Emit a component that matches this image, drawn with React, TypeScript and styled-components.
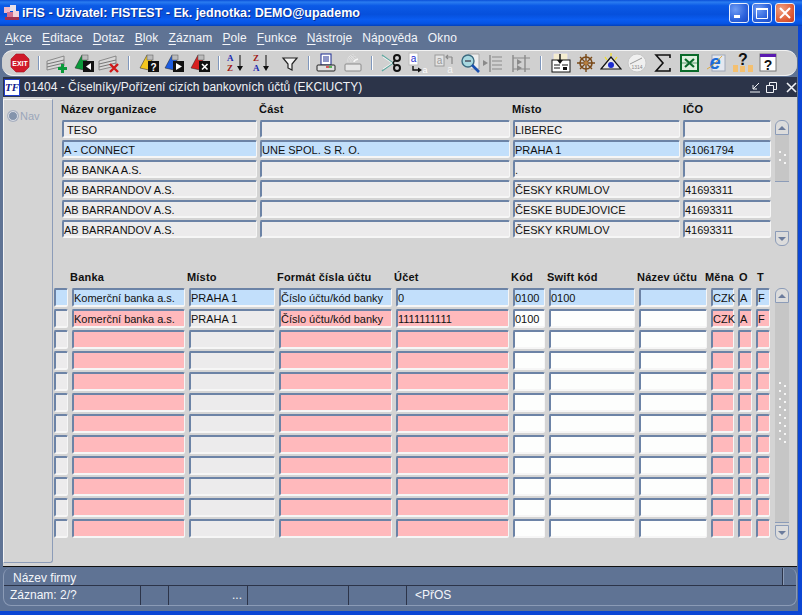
import React from 'react';
import styled, { createGlobalStyle } from 'styled-components';

const GlobalStyle = createGlobalStyle`
  html, body { margin: 0; padding: 0; background: #0a3fc8; }
  body { font-family: "Liberation Sans", Arial, sans-serif; }
`;

const Frame = styled.div`
  width: 802px;
  height: 615px;
  overflow: hidden;
  display: flex;
  flex-direction: column;
  background: #0b46d4;
`;

const TitleBar = styled.div`
  height: 26px;
  flex: none;
  display: flex;
  align-items: center;
  padding: 0 7px 0 3px;
  background: linear-gradient(#0a4fd8 0%, #2a7cf0 8%, #0b5ae6 22%, #0650dc 55%, #0a5cf0 75%, #0654e4 90%, #0440b8 100%);
  color: #fff;
`;

const TitleText = styled.div`
  margin-left: 1px;
  font: bold 12.5px "Liberation Sans", sans-serif;
  white-space: nowrap;
  text-shadow: 1px 1px 0 #0a2f90;
  flex: 1;
`;

const WinButtons = styled.div`
  display: flex;
  gap: 3px;
`;

const WinButton = styled.div<{ $close?: boolean }>`
  width: 20px;
  height: 20px;
  box-sizing: border-box;
  border: 1px solid #e8eefc;
  border-radius: 3px;
  background: ${p => (p.$close
    ? 'radial-gradient(circle at 30% 30%, #f0a080, #e0603a 60%, #c83c20)'
    : 'radial-gradient(circle at 30% 30%, #6f9cf4, #2c62dc 60%, #1a48c4)')};
  display: flex;
  align-items: center;
  justify-content: center;
`;

const Body = styled.div`
  flex: 1;
  display: flex;
  flex-direction: column;
  background: #5f7394;
  margin-right: 4px;
  margin-bottom: 4px;
  min-height: 0;
`;

const MenuBar = styled.div`
  height: 24px;
  flex: none;
  display: flex;
  align-items: center;
  padding-left: 5px;
  gap: 10px;
  color: #f4f6fa;
  font-size: 12px;
  letter-spacing: 0.1px;
`;

const MenuItem = styled.span`
  u { text-decoration: underline; text-underline-offset: 2px; }
`;

const Toolbar = styled.div`
  height: 26px;
  flex: none;
  box-sizing: border-box;
  margin: 0 1px 1px 2px;
  padding-left: 7px;
  display: flex;
  align-items: center;
  background: #d0d0d0;
  border-top: 1px solid #f2f2f2;
  border-bottom: 1px solid #f2f2f2;
  border-radius: 11px;
`;

const ToolIcon = styled.div<{ $ml: number }>`
  width: 22px;
  height: 22px;
  flex: none;
  margin-left: ${p => p.$ml}px;
  svg { display: block; }
`;

const ToolSep = styled.div<{ $ml: number }>`
  width: 2px;
  height: 14px;
  flex: none;
  margin-left: ${p => p.$ml}px;
  background: #7f97bd;
  border-right: 1px solid #fff;
  box-sizing: border-box;
`;

const Window = styled.div`
  flex: 1;
  display: flex;
  flex-direction: column;
  margin-left: 3px;
  margin-right: 1px;
  min-height: 0;
`;

const WindowHead = styled.div`
  height: 20px;
  flex: none;
  display: flex;
  align-items: center;
  background: #2c3449;
  color: #f0f2f6;
  font-size: 12px;
`;

const LogoBox = styled.div`
  width: 16px;
  height: 17px;
  margin: 0 4px 0 1px;
  box-sizing: border-box;
  border: 1px solid #1f3ccc;
  background: #fff;
  color: #13208c;
  font: italic bold 11px/14px "Liberation Serif", serif;
  text-align: center;
`;

const WindowTitle = styled.div`
  flex: 1;
  white-space: nowrap;
`;

const WindowActions = styled.div`
  display: flex;
  gap: 5px;
  svg { display: block; }
  svg:last-child { margin-left: 4px; }
`;

const Content = styled.div`
  flex: 1;
  display: flex;
  background: #d4d4d4;
  border-bottom: 1px solid #101010;
  min-height: 0;
`;

const NavPanel = styled.div`
  width: 50px;
  flex: none;
  box-sizing: border-box;
  margin: 2px 0 3px;
  padding: 10px 0 0 4px;
  display: flex;
  align-items: flex-start;
  gap: 2px;
  border-left: 1px solid #f4f4f4;
  border-top: 1px solid #f4f4f4;
  border-right: 1px solid #8c9cb8;
  border-bottom: 1px solid #8c9cb8;
  border-radius: 0 0 3px 0;
  color: #9aa6ba;
  font-size: 11px;
`;

const Radio = styled.span`
  width: 10px;
  height: 10px;
  margin-top: 1px;
  box-sizing: border-box;
  border-radius: 50%;
  background: #8494ac;
  border: 1px solid #d8dce4;
  box-shadow: 0 0 0 1px #a8b0c0;
`;

const Main = styled.div`
  flex: 1;
  display: flex;
  flex-direction: column;
  min-width: 0;
`;

const Section = styled.div<{ $left: number; $top: number }>`
  display: flex;
  align-items: flex-end;
  padding-left: ${p => p.$left}px;
  margin-top: ${p => p.$top}px;
`;

const Grid = styled.div<{ $cols: string; $rowGap: number; $colGap: number }>`
  display: grid;
  grid-template-columns: ${p => p.$cols};
  column-gap: ${p => p.$colGap}px;
  row-gap: ${p => p.$rowGap}px;
`;

const Label = styled.div<{ $shift?: number }>`
  height: 17px;
  line-height: 17px;
  font-size: 11px;
  font-weight: bold;
  color: #101010;
  letter-spacing: 0.2px;
  white-space: nowrap;
  margin-left: ${p => p.$shift ?? -1}px;
`;

const fieldColors = {
  gray: '#ecebec',
  blue: '#c2dffb',
  pink: '#ffb9bc',
  white: '#fdfefd',
};

type FieldTone = keyof typeof fieldColors;

const Field = styled.div<{ $tone: FieldTone; $h: number; $indent?: number }>`
  height: ${p => p.$h}px;
  box-sizing: border-box;
  padding-left: ${p => p.$indent ?? 0}px;
  background: ${p => fieldColors[p.$tone]};
  border-top: 2px solid #6c83a6;
  border-left: 2px solid #6c83a6;
  border-right: 1px solid #f6f6f6;
  border-bottom: 2px solid #f6f6f6;
  border-radius: 2px;
  color: #111;
  font-size: 11px;
  line-height: ${p => p.$h - 2}px;
  white-space: nowrap;
`;

const ScrollBar = styled.div<{ $h: number; $over: number; $ml: number }>`
  width: 14px;
  height: ${p => p.$h}px;
  flex: none;
  margin-left: ${p => p.$ml}px;
  margin-bottom: -${p => p.$over}px;
  display: flex;
  flex-direction: column;
`;

const ScrollButton = styled.div<{ $down?: boolean }>`
  height: 15px;
  flex: none;
  box-sizing: border-box;
  border: 1px solid #8c9cb8;
  border-radius: ${p => (p.$down ? '0 0 6px 6px' : '6px 6px 0 0')};
  background: #dcdcdc;
  display: flex;
  align-items: center;
  justify-content: center;
`;

const Arrow = styled.span<{ $down?: boolean }>`
  width: 0;
  height: 0;
  border-left: 4px solid transparent;
  border-right: 4px solid transparent;
  ${p => (p.$down ? 'border-top: 4px solid #6c7c9c;' : 'border-bottom: 4px solid #6c7c9c;')}
`;

const Thumb = styled.div<{ $h: number }>`
  height: ${p => p.$h}px;
  flex: none;
  box-sizing: border-box;
  background: #c6c6c6;
  border-bottom: 1px solid #8c9cb8;
  display: flex;
  align-items: center;
  justify-content: center;
`;

const TrackRest = styled.div`
  flex: 1;
`;

const StatusBar = styled.div`
  flex: none;
  box-sizing: border-box;
  margin: 1px 1px 5px 3px;
  height: 38px;
  border: 1px solid #8b9bb6;
  border-top: none;
  border-radius: 8px;
  color: #f4f6fa;
  font-size: 12px;
  display: flex;
  flex-direction: column;
`;

const StatusTop = styled.div`
  height: 18px;
  flex: none;
  box-sizing: border-box;
  padding-left: 9px;
  line-height: 20px;
  border-bottom: 1px solid #2c3449;
  display: flex;
  justify-content: space-between;
`;

const StatusCell = styled.div<{ $w?: number; $align?: string; $pad?: number }>`
  ${p => (p.$w ? `width: ${p.$w}px; flex: none;` : 'flex: 1;')}
  box-sizing: border-box;
  height: 100%;
  padding-left: ${p => p.$pad ?? 0}px;
  text-align: ${p => p.$align ?? 'left'};
  line-height: 19px;
  white-space: nowrap;
  border-right: 1px solid #2c3449;
  &:last-child { border-right: none; }
`;

const StatusBottom = styled.div`
  flex: 1;
  display: flex;
`;

const StatusEnd = styled.div`
  width: 13px;
  height: 17px;
  border-left: 1px solid #2c3449;
  box-shadow: inset 1px 0 0 #8b9bb6;
`;

const Doc = ({ color, mark }: { color: string; mark: React.ReactNode }) => (
  <svg width="22" height="22" viewBox="0 0 22 22">
    <path d="M2 16 L9 3 L14 7 L11 18 Z" fill={color} stroke="#222" strokeWidth="0.5" />
    <rect x="9" y="3" width="6" height="5" fill="#bbb" stroke="#555" strokeWidth="0.5" />
    <rect x="10" y="9" width="11" height="11" fill="#111" />
    {mark}
  </svg>
);

const Stripes = ({ mark }: { mark: React.ReactNode }) => (
  <svg width="22" height="22" viewBox="0 0 22 22">
    <path d="M1 9 L18 4 V14 L1 18 Z" fill="#d8d8d8" stroke="#777" strokeWidth="0.8" />
    <path d="M1 12 L18 8 M1 15 L18 11" stroke="#777" strokeWidth="1" />
    {mark}
  </svg>
);

const Glyph = ({ children }: { children: React.ReactNode }) => (
  <svg width="22" height="22" viewBox="0 0 22 22">{children}</svg>
);

const sortLetters = (top: string, bottom: string, topFill: string, bottomFill: string) => (
  <Glyph>
    <text x="2" y="9" fontSize="9" fontWeight="bold" fontFamily="Liberation Serif" fill={topFill}>{top}</text>
    <text x="2" y="19" fontSize="9" fontWeight="bold" fontFamily="Liberation Serif" fill={bottomFill}>{bottom}</text>
    <path d="M15 3 V15" stroke="#111" strokeWidth="1" />
    <path d="M12 14 H18 L15 19 Z" fill="#111" />
  </Glyph>
);

const toolIcons: Record<string, React.ReactNode> = {
  exit: (
    <Glyph>
      <path d="M7 2 H15 L20 7 V15 L15 20 H7 L2 15 V7 Z" fill="#d01a2a" stroke="#a01020" strokeWidth="0.6" />
      <text x="11" y="13.5" textAnchor="middle" fontSize="7" fontWeight="bold" fontFamily="Liberation Sans" fill="#fff">EXIT</text>
    </Glyph>
  ),
  add: <Stripes mark={<path d="M12 15 H15 V12 H18 V15 H21 V18 H18 V21 H15 V18 H12 Z" fill="#0a9a3a" />} />,
  green: <Doc color="#0a9a3a" mark={<path d="M13 14.5 L18 11 V18 Z" fill="#fff" />} />,
  remove: <Stripes mark={<path d="M12 12 L20 20 M20 12 L12 20" stroke="#d01818" strokeWidth="2.4" />} />,
  yellow: <Doc color="#f4c820" mark={<text x="15.5" y="18.5" textAnchor="middle" fontSize="10" fontWeight="bold" fontFamily="Liberation Sans" fill="#fff">?</text>} />,
  blue: <Doc color="#1c5ce0" mark={<path d="M13 11 L19 14.5 L13 18 Z" fill="#fff" />} />,
  red: <Doc color="#d82020" mark={<path d="M13 12 L18.5 17.5 M18.5 12 L13 17.5" stroke="#fff" strokeWidth="1.6" />} />,
  az: sortLetters('A', 'Z', '#1a2ab0', '#a01818'),
  za: sortLetters('Z', 'A', '#a01818', '#1a2ab0'),
  filter: (
    <Glyph>
      <path d="M4 6 H18 L13 12 V18 L9 16 V12 Z" fill="#f2f2f2" stroke="#222" strokeWidth="1.2" />
    </Glyph>
  ),
  print: (
    <Glyph>
      <rect x="6" y="2" width="10" height="11" fill="#fff" stroke="#1a2a90" />
      <path d="M8 5 H14 M8 7 H14 M8 9 H14" stroke="#1a2a90" />
      <rect x="2" y="13" width="18" height="6" rx="1" fill="#e0e0e0" stroke="#222" />
      <path d="M11 15 H14" stroke="#d02020" strokeWidth="1.4" />
      <path d="M14 15 H17" stroke="#20a020" strokeWidth="1.4" />
    </Glyph>
  ),
  printOff: (
    <Glyph>
      <path d="M6 10 Q6 4 12 3 M9 10 Q9 6 14 5 M12 10 Q12 8 16 7" stroke="#f6f6f6" strokeWidth="1.6" fill="none" />
      <path d="M6 10 Q6 4 12 3 M9 10 Q9 6 14 5" stroke="#999" strokeWidth="0.5" fill="none" />
      <rect x="3" y="12" width="16" height="7" rx="1" fill="#e6e6e6" stroke="#8a8a8a" />
    </Glyph>
  ),
  cut: (
    <Glyph>
      <path d="M1 3 L12 11 L1 19" stroke="#5fa8a0" strokeWidth="1.4" fill="none" />
      <path d="M2 5 L11 11 L2 17" stroke="#fff" strokeWidth="0.8" fill="none" />
      <circle cx="16" cy="6" r="3" fill="none" stroke="#111" strokeWidth="2" />
      <circle cx="16" cy="16" r="3" fill="none" stroke="#111" strokeWidth="2" />
      <path d="M12 11 L14 8 M12 11 L14 14" stroke="#111" strokeWidth="1.4" />
    </Glyph>
  ),
  copy: (
    <Glyph>
      <rect x="3" y="1" width="9" height="12" fill="#fff" stroke="#bbb" />
      <text x="7.5" y="10" textAnchor="middle" fontSize="10" fontFamily="Liberation Sans" fill="#1a2ad0">a</text>
      <path d="M7 14 V18 H13" stroke="#111" strokeWidth="1.4" fill="none" />
      <path d="M12 15.5 L16 18 L12 20.5 Z" fill="#111" />
      <text x="19" y="21" textAnchor="middle" fontSize="9" fontFamily="Liberation Sans" fill="#fff">a</text>
    </Glyph>
  ),
  paste: (
    <Glyph>
      <rect x="2" y="3" width="9" height="11" fill="#e4e4e4" stroke="#999" />
      <text x="6.5" y="12" textAnchor="middle" fontSize="10" fontFamily="Liberation Sans" fill="#999">a</text>
      <path d="M19 5 H13 M15 3 L13 5 L15 7 M19 5 V12" stroke="#888" strokeWidth="1.2" fill="none" />
      <text x="17" y="21" textAnchor="middle" fontSize="10" fontFamily="Liberation Sans" fill="#f4f4f4">a</text>
    </Glyph>
  ),
  zoom: (
    <Glyph>
      <path d="M9 2 H20 V17 H12" fill="#eee" stroke="#aaa" />
      <circle cx="9" cy="9" r="6" fill="#a8d8e0" stroke="#3a6a80" strokeWidth="1.4" />
      <path d="M6 9 H12" stroke="#445" strokeWidth="1.4" />
      <path d="M13 13 L20 20" stroke="#1a50b0" strokeWidth="2.6" />
    </Glyph>
  ),
  indent: (
    <Glyph>
      <path d="M8 3 V20" stroke="#8a8a8a" strokeWidth="1.4" />
      <path d="M1 8 L6 11 L1 14 Z" fill="#8a8a8a" />
      <path d="M10 5 H20 M10 9 H20 M10 13 H20 M10 17 H20" stroke="#8a8a8a" strokeWidth="1.2" />
    </Glyph>
  ),
  indentBoth: (
    <Glyph>
      <path d="M3 3 V20 M15 3 V20" stroke="#8a8a8a" strokeWidth="1.4" />
      <path d="M3 6 H20 M3 17 H20" stroke="#8a8a8a" strokeWidth="1" />
      <path d="M7 7 L12 10 L7 13 Z M7 13 L12 16 L7 19 Z" fill="#8a8a8a" />
    </Glyph>
  ),
  form: (
    <Glyph>
      <rect x="3" y="1" width="15" height="8" fill="#f4ecd0" stroke="#c8c8e0" />
      <rect x="2" y="8" width="18" height="12" fill="#fff" stroke="#111" />
      <path d="M4 13 H10 M4 16 H10 M12 13 H18" stroke="#111" />
      <rect x="13" y="15" width="4" height="3" fill="#111" />
      <path d="M10 2 V9" stroke="#111" strokeWidth="1.4" />
      <path d="M7 8 H13 L10 12 Z" fill="#111" />
    </Glyph>
  ),
  wheel: (
    <Glyph>
      <circle cx="11" cy="11" r="6" fill="none" stroke="#7a4a18" strokeWidth="1.6" />
      <path d="M11 2 V20 M2 11 H20 M5 5 L17 17 M17 5 L5 17" stroke="#7a4a18" strokeWidth="1.4" />
      <circle cx="11" cy="11" r="2" fill="#b88040" />
    </Glyph>
  ),
  eye: (
    <Glyph>
      <path d="M1 17 L11 5 L21 17 Z" fill="#e8e8e8" stroke="#111" strokeWidth="1.2" />
      <circle cx="11" cy="13" r="3" fill="#1c2cd0" />
      <path d="M5 5 L7 8 M17 5 L15 8 M11 1 V4" stroke="#f4e020" strokeWidth="1.2" />
    </Glyph>
  ),
  clock: (
    <Glyph>
      <circle cx="11" cy="11" r="9" fill="#f0f0f0" stroke="#c8c8c8" />
      <path d="M4 12 L16 6" stroke="#999" strokeWidth="1" />
      <text x="11" y="17" textAnchor="middle" fontSize="5" fontFamily="Liberation Sans" fill="#888">1314</text>
    </Glyph>
  ),
  sigma: (
    <Glyph>
      <path d="M18 6 V3 H4 L11 11 L4 19 H18 V16" fill="none" stroke="#111" strokeWidth="1.6" />
    </Glyph>
  ),
  excel: (
    <Glyph>
      <rect x="2" y="3" width="17" height="16" fill="#dff0df" stroke="#0a6a2a" strokeWidth="2" />
      <path d="M6 7 L15 15 M15 7 L6 15" stroke="#0a6a2a" strokeWidth="2.2" />
      <path d="M3 11 H18" stroke="#0a6a2a" strokeWidth="0.6" />
    </Glyph>
  ),
  ie: (
    <Glyph>
      <rect x="7" y="3" width="13" height="16" fill="#e4e8f0" stroke="#a0a8b8" />
      <text x="10" y="17" textAnchor="middle" fontSize="20" fontWeight="bold" fontStyle="italic" fontFamily="Liberation Sans" fill="#1c6cd8">e</text>
      <path d="M2 17 Q8 14 17 4" stroke="#e0a020" strokeWidth="0.8" fill="none" />
    </Glyph>
  ),
  help: (
    <Glyph>
      <text x="11" y="13" textAnchor="middle" fontSize="16" fontWeight="bold" fontFamily="Liberation Sans" fill="#111">?</text>
      <rect x="1" y="13" width="5" height="7" fill="#f4c070" />
      <rect x="8" y="14" width="5" height="6" fill="#f4c070" />
      <rect x="16" y="13" width="5" height="7" fill="#f4c070" />
    </Glyph>
  ),
  helpWin: (
    <Glyph>
      <rect x="3" y="2" width="16" height="17" fill="#fff" stroke="#777" />
      <rect x="3" y="2" width="16" height="3" fill="#5a1ab0" />
      <text x="11" y="18" textAnchor="middle" fontSize="14" fontWeight="bold" fontFamily="Liberation Sans" fill="#111">?</text>
    </Glyph>
  ),
};

// ml = gap to the previous item, a sep is drawn where id is null
const toolbarItems: { id: string | null; ml: number }[] = [
  { id: 'exit', ml: 0 }, { id: null, ml: 7 }, { id: 'add', ml: 6 }, { id: 'green', ml: 5 }, { id: 'remove', ml: 3 },
  { id: null, ml: 8 }, { id: 'yellow', ml: 8 }, { id: 'blue', ml: 3 }, { id: 'red', ml: 4 },
  { id: null, ml: 7 }, { id: 'az', ml: 5 }, { id: 'za', ml: 4 }, { id: 'filter', ml: 6 },
  { id: null, ml: 7 }, { id: 'print', ml: 5 }, { id: 'printOff', ml: 5 },
  { id: null, ml: 7 }, { id: 'cut', ml: 8 }, { id: 'copy', ml: 3 }, { id: 'paste', ml: 5 }, { id: 'zoom', ml: 4 },
  { id: 'indent', ml: 1 }, { id: 'indentBoth', ml: 6 },
  { id: null, ml: 8 }, { id: 'form', ml: 8 }, { id: 'wheel', ml: 3 }, { id: 'eye', ml: 3 }, { id: 'clock', ml: 4 },
  { id: 'sigma', ml: 4 }, { id: 'excel', ml: 5 }, { id: 'ie', ml: 4 }, { id: 'help', ml: 5 }, { id: 'helpWin', ml: 3 },
];

const menus: React.ReactNode[] = [
  <><u>A</u>kce</>, <><u>E</u>ditace</>, <><u>D</u>otaz</>, <><u>B</u>lok</>, <><u>Z</u>áznam</>,
  <><u>P</u>ole</>, <><u>F</u>unkce</>, <><u>N</u>ástroje</>, <>Nápo<u>v</u>ěda</>, <>Okno</>,
];

const orgRows = [
  ['TESO', '', 'LIBEREC', ''],
  ['A - CONNECT', 'UNE SPOL. S R. O.', 'PRAHA 1', '61061794'],
  ['AB BANKA A.S.', '', '.', ''],
  ['AB BARRANDOV A.S.', '', 'ČESKY KRUMLOV', '41693311'],
  ['AB BARRANDOV A.S.', '', 'ČESKE BUDEJOVICE', '41693311'],
  ['AB BARRANDOV A.S.', '', 'ČESKY KRUMLOV', '41693311'],
];

const accountLabels: { text: string; shift?: number }[] = [
  { text: '' }, { text: 'Banka', shift: -2 }, { text: 'Místo', shift: -2 }, { text: 'Formát čísla účtu', shift: -2 },
  { text: 'Účet', shift: -2 }, { text: 'Kód', shift: -2 }, { text: 'Swift kód', shift: -2 }, { text: 'Název účtu', shift: -2 },
  { text: 'Měna', shift: -6 }, { text: 'O', shift: 1 }, { text: 'T', shift: 1 },
];

// which colour each account column has in an ordinary row
const accountTones: FieldTone[] = ['gray', 'pink', 'gray', 'pink', 'pink', 'white', 'white', 'white', 'pink', 'pink', 'pink'];

const accountRows: string[][] = [
  ['', 'Komerční banka a.s.', 'PRAHA 1', 'Číslo účtu/kód banky', '0', '0100', '0100', '', 'CZK', 'A', 'F'],
  ['', 'Komerční banka a.s.', 'PRAHA 1', 'Číslo účtu/kód banky', '1111111111', '0100', '', '', 'CZK', 'A', 'F'],
  ...Array.from({ length: 10 }, () => Array(11).fill('')),
];

const Grip = ({ pairs }: { pairs: number }) => (
  <svg width="10" height={pairs * 8} viewBox={`0 0 10 ${pairs * 8}`}>
    {Array.from({ length: pairs }, (_, i) => (
      <g key={i} fill="#f6f6f6">
        <rect x="2" y={i * 8 + 1} width="2" height="2" />
        <rect x="7" y={i * 8 + 4} width="2" height="2" />
      </g>
    ))}
  </svg>
);

const Scroller = ({ height, over, ml, thumb, pairs }: { height: number; over: number; ml: number; thumb: number; pairs: number }) => (
  <ScrollBar $h={height} $over={over} $ml={ml}>
    <ScrollButton><Arrow /></ScrollButton>
    <Thumb $h={thumb}><Grip pairs={pairs} /></Thumb>
    <TrackRest />
    <ScrollButton $down><Arrow $down /></ScrollButton>
  </ScrollBar>
);

export default function App() {
  return (
    <>
      <GlobalStyle />
      <Frame>
        <TitleBar>
          <svg width="18" height="18" viewBox="0 0 18 18">
            <rect x="1" y="3" width="6" height="6" fill="#f0b8c8" />
            <rect x="7" y="1" width="6" height="6" fill="#e8e0e8" />
            <rect x="4" y="8" width="8" height="6" fill="#d07090" />
            <rect x="10" y="7" width="6" height="8" fill="#f4d0d8" />
            <rect x="2" y="13" width="14" height="3" fill="#a03050" />
          </svg>
          <TitleText>iFIS - Uživatel: FISTEST - Ek. jednotka: DEMO@upademo</TitleText>
          <WinButtons>
            <WinButton>
              <svg width="14" height="14" viewBox="0 0 14 14"><rect x="2" y="9" width="6" height="3" fill="#fff" /></svg>
            </WinButton>
            <WinButton>
              <svg width="14" height="14" viewBox="0 0 14 14"><path d="M1.5 3 H12.5 V12.5 H1.5 Z" fill="none" stroke="#fff" /><rect x="1" y="2" width="12" height="2" fill="#fff" /></svg>
            </WinButton>
            <WinButton $close>
              <svg width="14" height="14" viewBox="0 0 14 14"><path d="M2 2 L12 12 M12 2 L2 12" stroke="#fff" strokeWidth="2" /></svg>
            </WinButton>
          </WinButtons>
        </TitleBar>
        <Body>
          <MenuBar>
            {menus.map((m, i) => <MenuItem key={i}>{m}</MenuItem>)}
          </MenuBar>
          <Toolbar>
            {toolbarItems.map((item, i) => item.id
              ? <ToolIcon key={i} $ml={item.ml}>{toolIcons[item.id]}</ToolIcon>
              : <ToolSep key={i} $ml={item.ml} />)}
          </Toolbar>
          <Window>
            <WindowHead>
              <LogoBox>TF</LogoBox>
              <WindowTitle>01404 - Číselníky/Pořízení cizích bankovních účtů (EKCIUCTY)</WindowTitle>
              <WindowActions>
                <svg width="11" height="11" viewBox="0 0 11 11"><path d="M9 1 L3 7 M3 3 V7 H7 M0 10 H10" stroke="#f0f2f6" fill="none" /></svg>
                <svg width="11" height="11" viewBox="0 0 11 11"><path d="M0.5 3.5 H7.5 V10.5 H0.5 Z M3.5 3 V0.5 H10.5 V7.5 H8" stroke="#f0f2f6" fill="none" /></svg>
                <svg width="11" height="11" viewBox="0 0 11 11"><path d="M1 1 L10 10 M10 1 L1 10" stroke="#f0f2f6" strokeWidth="1.6" /></svg>
              </WindowActions>
            </WindowHead>
            <Content>
              <NavPanel><Radio />Nav</NavPanel>
              <Main>
                <Section $left={9} $top={4}>
                  <Grid $cols="195px 250px 167px 88px" $colGap={3} $rowGap={2}>
                    <Label>Název organizace</Label>
                    <Label>Část</Label>
                    <Label>Místo</Label>
                    <Label $shift={0}>IČO</Label>
                    {orgRows.map((row, r) => row.map((text, c) => (
                      <Field key={`${r}-${c}`} $h={18} $tone={r === 1 ? 'blue' : 'gray'} $indent={r === 0 && c === 0 ? 3 : 0}>{text}</Field>
                    )))}
                  </Grid>
                  <Scroller height={126} over={8} ml={4} thumb={47} pairs={2} />
                </Section>
                <Section $left={1} $top={31}>
                  <Grid $cols="14px 113px 86px 113px 113px 32px 86px 68px 23px 14px 14px" $colGap={4} $rowGap={2}>
                    {accountLabels.map((l, i) => <Label key={i} $shift={l.shift}>{l.text}</Label>)}
                    {accountRows.map((row, r) => row.map((text, c) => (
                      <Field
                        key={`${r}-${c}`}
                        $h={19}
                        $tone={r === 0 ? 'blue' : accountTones[c]}
                      >
                        {text}
                      </Field>
                    )))}
                  </Grid>
                  <Scroller height={252} over={2} ml={5} thumb={220} pairs={8} />
                </Section>
              </Main>
            </Content>
          </Window>
          <StatusBar>
            <StatusTop>
              Název firmy
              <StatusEnd />
            </StatusTop>
            <StatusBottom>
              <StatusCell $w={137} $pad={6}>Záznam: 2/?</StatusCell>
              <StatusCell $w={28} />
              <StatusCell $w={79} $pad={63}>...</StatusCell>
              <StatusCell $w={101} />
              <StatusCell $w={58} />
              <StatusCell $pad={8}>&lt;PřOS</StatusCell>
            </StatusBottom>
          </StatusBar>
        </Body>
      </Frame>
    </>
  );
}
